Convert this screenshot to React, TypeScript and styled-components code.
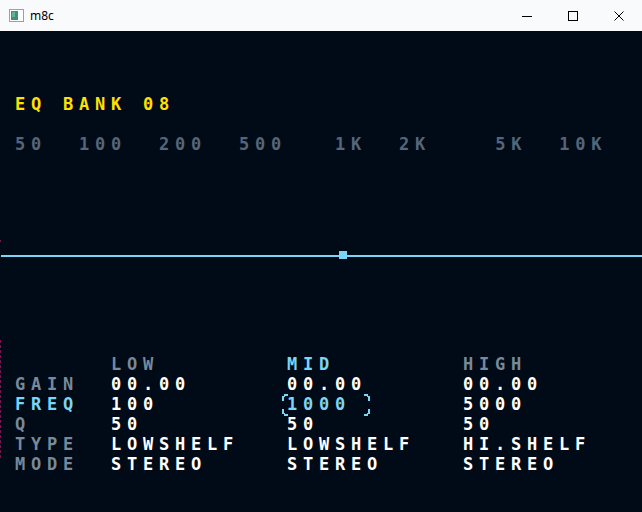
import React from "react";
import styled, { createGlobalStyle } from "styled-components";

const Global = createGlobalStyle`
  html, body { margin: 0; padding: 0; background: #010b17; }
  #root { width: 642px; height: 512px; overflow: hidden; }
`;

const Window = styled.div`
  width: 642px;
  height: 512px;
  display: flex;
  flex-direction: column;
  background: #010b17;
`;

const TitleBar = styled.div`
  height: 31px;
  flex: none;
  display: flex;
  align-items: center;
  background: #f9fafc;
  font-family: "Noto Sans", "Open Sans", sans-serif;
  font-size: 12px;
  color: #000;
`;

const AppIcon = styled.svg`
  margin-left: 9px;
  width: 15px;
  height: 13px;
`;

const Title = styled.span`
  margin-left: 6px;
  line-height: 31px;
`;

const Controls = styled.div`
  margin-left: auto;
  display: flex;
  height: 31px;
`;

const CtrlButton = styled.div`
  width: 46px;
  height: 31px;
  display: flex;
  align-items: center;
  justify-content: center;
`;

const Screen = styled.div`
  flex: 1;
  position: relative;
  display: flex;
  flex-direction: column;
  font-family: "DejaVu Sans Mono", "Liberation Mono", monospace;
  font-weight: bold;
  font-size: 17px;
  letter-spacing: 5.77px;
  line-height: 20px;
  white-space: pre;
`;

const Line = styled.div<{ $color: string; $top?: number }>`
  height: 20px;
  padding-left: 15px;
  color: ${(p) => p.$color};
  margin-top: ${(p) => p.$top ?? 0}px;
`;

const Graph = styled.div`
  height: 200px;
  padding-top: 101px;
  box-sizing: border-box;
`;

const Curve = styled.div`
  position: relative;
  margin-left: 1px;
  height: 2px;
  background: #7cd5f5;
`;

const Marker = styled.div`
  position: absolute;
  left: 338px;
  top: -4px;
  width: 8px;
  height: 8px;
  background: #7cd5f5;
`;

const Table = styled.div`
  display: grid;
  grid-template-columns: 96px 176px 176px 1fr;
  grid-auto-rows: 20px;
  padding-left: 15px;
`;

const Cell = styled.div<{ $color: string }>`
  position: relative;
  color: ${(p) => p.$color};
`;

const Cursor = styled.svg`
  position: absolute;
  left: -5px;
  top: 0;
  width: 88px;
  height: 22px;
`;

const EdgeMarks = styled.div<{ $top: number; $height: number }>`
  position: absolute;
  left: 0;
  top: ${(p) => p.$top}px;
  width: 1px;
  height: ${(p) => p.$height}px;
  background: repeating-linear-gradient(
    to bottom,
    #7a1450 0px,
    #7a1450 3px,
    transparent 3px,
    transparent 5px
  );
`;

const GREY = "#78899a";
const DIM = "#55657a";
const CYAN = "#7cd5f5";
const WHITE = "#ffffff";
const YELLOW = "#ffe000";

const rows: { label: string; values: string[]; active?: boolean }[] = [
  { label: "GAIN", values: ["00.00", "00.00", "00.00"] },
  { label: "FREQ", values: ["100", "1000", "5000"], active: true },
  { label: "Q", values: ["50", "50", "50"] },
  { label: "TYPE", values: ["LOWSHELF", "LOWSHELF", "HI.SHELF"] },
  { label: "MODE", values: ["STEREO", "STEREO", "STEREO"] },
];

export default function App() {
  return (
    <>
      <Global />
      <Window>
        <TitleBar>
          <AppIcon viewBox="0 0 15 13">
            <rect x="0.5" y="0.5" width="14" height="12" fill="#fff" stroke="#9aa0a8" />
            <rect x="2" y="2" width="7" height="9" fill="#3f8f7d" />
            <rect x="3" y="3" width="3" height="5" fill="#5fb39a" />
          </AppIcon>
          <Title>m8c</Title>
          <Controls>
            <CtrlButton>
              <svg width="10" height="10" viewBox="0 0 10 10">
                <rect x="0" y="5" width="10" height="1" fill="#000" />
              </svg>
            </CtrlButton>
            <CtrlButton>
              <svg width="10" height="10" viewBox="0 0 10 10">
                <rect x="0.5" y="0.5" width="9" height="9" fill="none" stroke="#000" />
              </svg>
            </CtrlButton>
            <CtrlButton>
              <svg width="10" height="10" viewBox="0 0 10 10">
                <path d="M0.5 0.5 L9.5 9.5 M9.5 0.5 L0.5 9.5" stroke="#000" strokeWidth="1" />
              </svg>
            </CtrlButton>
          </Controls>
        </TitleBar>
        <Screen>
          <EdgeMarks $top={209} $height={2} />
          <EdgeMarks $top={309} $height={118} />
          <Line $color={YELLOW} $top={63}>EQ BANK 08</Line>
          <Line $color={DIM} $top={20}>{"50  100  200  500   1K  2K    5K  10K"}</Line>
          <Graph>
            <Curve>
              <Marker />
            </Curve>
          </Graph>
          <Table>
            <Cell $color={GREY} />
            <Cell $color={GREY}>LOW</Cell>
            <Cell $color={CYAN}>MID</Cell>
            <Cell $color={GREY}>HIGH</Cell>
            {rows.map((r) => (
              <React.Fragment key={r.label}>
                <Cell $color={r.active ? CYAN : GREY}>{r.label}</Cell>
                {r.values.map((v, i) => {
                  const selected = r.active && i === 1;
                  return (
                    <Cell key={i} $color={selected ? CYAN : WHITE}>
                      {v}
                      {selected && (
                        <Cursor viewBox="0 0 88 22">
                          <g fill={CYAN}>
                            <rect x="0" y="2" width="2" height="5" />
                            <rect x="2" y="0" width="4" height="2" />
                            <rect x="2" y="2" width="1" height="1" />
                            <rect x="0" y="15" width="2" height="5" />
                            <rect x="2" y="20" width="4" height="2" />
                            <rect x="2" y="19" width="1" height="1" />
                            <rect x="86" y="2" width="2" height="5" />
                            <rect x="82" y="0" width="4" height="2" />
                            <rect x="85" y="2" width="1" height="1" />
                            <rect x="86" y="15" width="2" height="5" />
                            <rect x="82" y="20" width="4" height="2" />
                            <rect x="85" y="19" width="1" height="1" />
                          </g>
                        </Cursor>
                      )}
                    </Cell>
                  );
                })}
              </React.Fragment>
            ))}
          </Table>
        </Screen>
      </Window>
    </>
  );
}
